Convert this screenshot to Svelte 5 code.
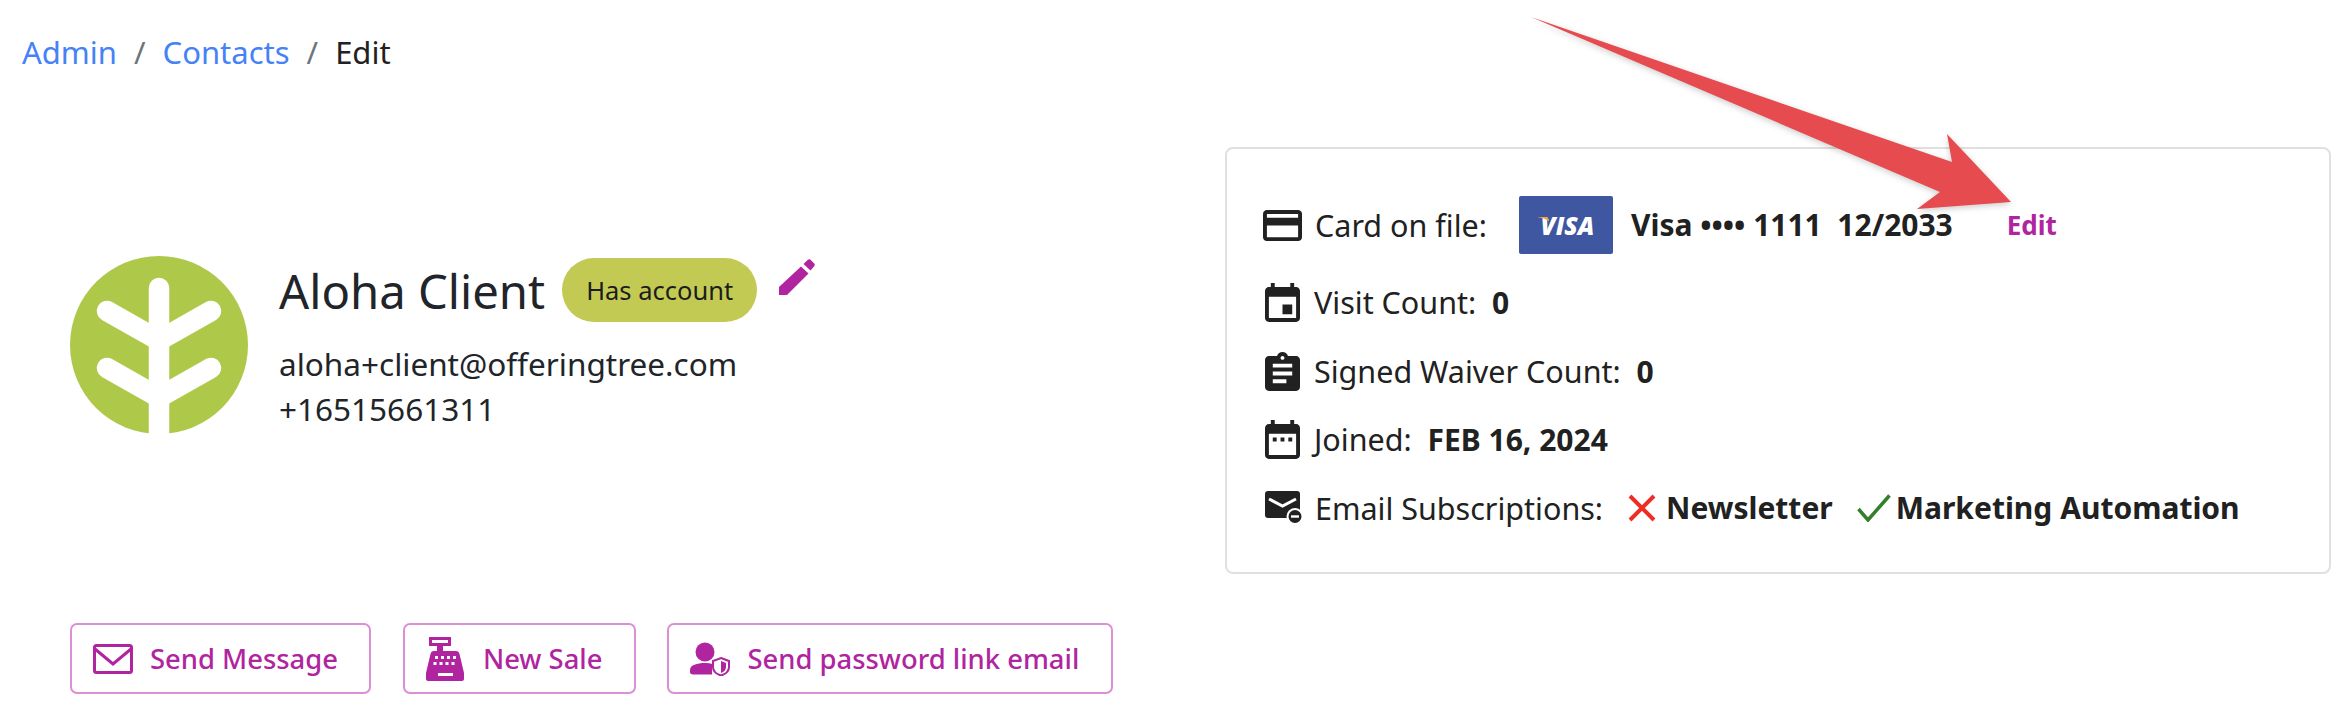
<script lang="ts">
	const crumbs = ['Admin', 'Contacts'];
</script>

<div class="page">
	<nav class="crumbs">
		{#each crumbs as c}
			<span class="link">{c}</span>
			<span class="sep">/</span>
		{/each}
		<span>Edit</span>
	</nav>

	<div class="main">
		<div class="left">
			<div class="head">
				<svg class="avatar" viewBox="0 0 178 178">
					<circle cx="89" cy="89" r="89" fill="#aec84a" />
					<g stroke="#fff" stroke-width="20.5" stroke-linecap="round" fill="none">
						<path d="M89 32V190" />
						<path d="M37 55L89 84.500L141 55" />
						<path d="M37 112L89 141.500L141 112" />
					</g>
				</svg>
				<div class="info">
					<div class="name-row">
						<span class="name">Aloha Client</span>
						<span class="pill">Has account</span>
						<svg class="pencil" viewBox="0 0 36 36">
							<path d="M0 28L22 7.500L29.500 14.500L8 36H0Z" />
							<path d="M24.500 5L28.600 1C29.600 0 30.800 0 31.800 1L35 4.200C36 5.200 36 6.400 35 7.400L31.500 11.500Z" />
						</svg>
					</div>
					<div class="contact">aloha+client@offeringtree.com</div>
					<div class="contact">+16515661311</div>
				</div>
			</div>

			<div class="actions">
				<button class="btn msg">
					<svg class="btn-icon" width="40" height="30" viewBox="0 0 40 30">
						<rect x="1.500" y="1.500" width="37" height="27" rx="2" fill="none" stroke="#b0259f" stroke-width="3" />
						<path d="M2 5L20 20L38 5" fill="none" stroke="#b0259f" stroke-width="3" />
					</svg>
					Send Message
				</button>
				<button class="btn sale">
					<svg class="btn-icon" width="40" height="44" viewBox="0 0 40 44">
						<path fill="#b0259f" d="M3 0H25V9H17V14H30C32 14 33 15 33.500 17L38 36V42C38 43 37 44 36 44H2C1 44 0 43 0 42V36L4.500 17C5 15 6 14 8 14H11V9H3ZM6 3V6H22V3Z" />
						<g fill="#fff">
							<rect x="9" y="19" width="3" height="3" /><rect x="15" y="19" width="3" height="3" /><rect x="21" y="19" width="3" height="3" /><rect x="27" y="19" width="3" height="3" />
							<rect x="7.500" y="25" width="3" height="3" /><rect x="13.500" y="25" width="3" height="3" /><rect x="19.500" y="25" width="3" height="3" /><rect x="25.500" y="25" width="3" height="3" />
							<rect x="12" y="36" width="15" height="3" />
						</g>
					</svg>
					New Sale
				</button>
				<button class="btn pw">
					<svg class="btn-icon" width="40" height="34" viewBox="0 0 40 34">
						<circle cx="15" cy="10" r="9.500" fill="#b0259f" />
						<path fill="#b0259f" d="M0 28C0 23 7 21 15 21C18 21 20 21.300 22 22V32.500H3C1 32.500 0 31.500 0 30Z" />
						<path fill="none" stroke="#b0259f" stroke-width="2" d="M31 16L39 19V25C39 29 36 32 31 33.500C26 32 23 29 23 25V19Z" />
						<path fill="#b0259f" d="M31 19L36 21V25C36 28 34 29.800 31 31Z" />
					</svg>
					Send password link email
				</button>
			</div>
		</div>

		<div class="card">
			<div class="row first">
				<svg class="icon wide" viewBox="2 4 20 16" preserveAspectRatio="none"><path d="M20 4H4c-1.110 0-1.990.890-1.990 2L2 18c0 1.110.890 2 2 2h16c1.110 0 2-.890 2-2V6c0-1.110-.890-2-2-2zm0 14H4v-6h16v6zm0-10H4V6h16v2z" /></svg>
				<span class="label">Card on file:</span>
				<span class="visa">
					<span class="visa-text">VISA</span>
					<svg class="swoosh" viewBox="0 0 12 5"><path d="M0 0H9C11 0 12 1.500 12 4.500C9 2 5 .8 0 0Z" /></svg>
				</span>
				<b class="card-no">Visa •••• 1111 &nbsp;12/2033</b>
				<b class="edit">Edit</b>
			</div>
			<div class="row">
				<svg class="icon" viewBox="3 1 18 20"><path d="M17 12h-5v5h5v-5zM16 1v2H8V1H6v2H5c-1.110 0-1.990.900-1.990 2L3 19c0 1.100.890 2 2 2h14c1.100 0 2-.900 2-2V5c0-1.100-.900-2-2-2h-1V1h-2zm3 18H5V8h14v11z" /></svg>
				<span class="label">Visit Count: &nbsp;<b>0</b></span>
			</div>
			<div class="row">
				<svg class="icon" viewBox="3 1 18 20"><path d="M19 3h-4.180C14.400 1.840 13.300 1 12 1c-1.300 0-2.400.840-2.820 2H5c-1.100 0-2 .900-2 2v14c0 1.100.900 2 2 2h14c1.100 0 2-.900 2-2V5c0-1.100-.900-2-2-2zm-7 0c.550 0 1 .450 1 1s-.450 1-1 1-1-.450-1-1 .450-1 1-1zm2 14H7v-2h7v2zm3-4H7v-2h10v2zm0-4H7V7h10v2z" /></svg>
				<span class="label">Signed Waiver Count: &nbsp;<b>0</b></span>
			</div>
			<div class="row">
				<svg class="icon" viewBox="3 2 18 20"><path d="M9 11H7v2h2v-2zm4 0h-2v2h2v-2zm4 0h-2v2h2v-2zm2-7h-1V2h-2v2H8V2H6v2H5c-1.110 0-1.990.900-1.990 2L3 20c0 1.100.890 2 2 2h14c1.100 0 2-.900 2-2V6c0-1.100-.900-2-2-2zm0 16H5V9h14v11z" /></svg>
				<span class="label">Joined: &nbsp;<b>FEB 16, 2024</b></span>
			</div>
			<div class="row">
				<svg class="icon mail" viewBox="0 0 38 33">
					<rect x="0" y="0" width="35" height="27" rx="3" />
					<path d="M4 8L17.500 15L31 8" fill="none" stroke="#fff" stroke-width="3" />
					<circle cx="30" cy="25.500" r="8.500" fill="#fff" />
					<circle cx="30" cy="25.500" r="6.500" />
					<rect x="26" y="24.300" width="8" height="2.400" fill="#fff" />
				</svg>
				<span class="label">Email Subscriptions:</span>
				<svg class="mark cross" viewBox="0 0 28 28"><path d="M2 2L26 26M26 2L2 26" /></svg>
				<b class="sub">Newsletter</b>
				<svg class="mark check" viewBox="0 0 34 28"><path d="M1.500 15L11 26L32.500 1.500" /></svg>
				<b class="sub">Marketing Automation</b>
			</div>
		</div>
	</div>

	<svg class="arrow" width="560" height="250" viewBox="1500 0 560 250">
		<path d="M1531 17L1952 162L1947 134L2011 202L1917 209L1940 192Z" />
	</svg>
</div>

<style>
	:global(body) {
		margin: 0;
		background: #fff;
		font-family: 'Noto Sans', sans-serif;
		color: #212529;
	}

	.page {
		position: relative;
		height: 714px;
		overflow: hidden;
	}

	.crumbs {
		display: flex;
		align-items: center;
		gap: 17px;
		padding: 30px 0 0 22px;
		height: 44px;
		font-size: 31px;
		color: #212121;
	}

	.link {
		color: #4582f7;
	}

	.sep {
		color: #6c757d;
	}

	.main {
		display: flex;
		margin-top: 73px;
	}

	.left {
		width: 1225px;
		flex-shrink: 0;
		box-sizing: border-box;
		padding: 109px 0 0 70px;
	}

	.head {
		display: flex;
		gap: 31px;
		height: 178px;
	}

	.avatar {
		width: 178px;
		height: 178px;
		flex-shrink: 0;
	}

	.info {
		padding-top: 2px;
	}

	.name-row {
		display: flex;
		align-items: center;
		height: 64px;
		margin-bottom: 19px;
	}

	.name {
		font-size: 47.250px;
		margin-right: 17px;
	}

	.pill {
		display: flex;
		align-items: center;
		height: 64px;
		padding: 0 24px;
		border-radius: 32px;
		background: #c3ca54;
		color: #1c1c1c;
		font-size: 25.500px;
	}

	.pencil {
		width: 36px;
		height: 36px;
		margin: -26px 0 0 22px;
		fill: #b0259f;
	}

	.contact {
		font-size: 31.500px;
		line-height: 45px;
	}

	.actions {
		display: flex;
		gap: 31.500px;
		margin-top: 189px;
	}

	.btn {
		display: flex;
		align-items: center;
		height: 71px;
		box-sizing: border-box;
		padding: 0 31.500px 0 21px;
		background: #fff;
		border: 2px solid #de8fd3;
		border-radius: 7px;
		color: #b0259f;
		font: 500 27.400px 'Noto Sans', sans-serif;
	}

	.btn-icon {
		margin-right: 17px;
		flex-shrink: 0;
	}

	.card {
		width: 1106px;
		height: 427px;
		box-sizing: border-box;
		padding: 47px 36px 0;
		border: 2px solid #e0e0e0;
		border-radius: 8px;
		display: flex;
		flex-direction: column;
		gap: 27.500px;
		color: #212121;
		font-size: 30.500px;
		line-height: 40px;
	}

	.label b {
		font-size: 30px;
	}

	.row {
		display: flex;
		align-items: center;
		min-height: 40px;
	}

	.first {
		margin-bottom: 0.5px;
	}

	.icon {
		width: 35px;
		height: 39px;
		margin: 0 14px 0 2px;
		flex-shrink: 0;
		fill: #212121;
	}

	.wide {
		width: 39px;
		height: 31px;
		margin: 0 13px 0 0;
	}

	.mail {
		width: 38px;
		height: 33px;
		margin: 0 12px 0 2px;
	}

	.visa {
		position: relative;
		display: flex;
		align-items: center;
		justify-content: center;
		box-sizing: border-box;
		width: 94px;
		height: 58px;
		padding-left: 3px;
		margin: 0 18px 0 32px;
		background: #3f56a1;
		border-radius: 2px;
	}

	.visa-text {
		color: #fff;
		font: italic 800 24.500px 'Open Sans', sans-serif;
	}

	.swoosh {
		position: absolute;
		left: 18px;
		top: 21px;
		width: 12px;
		height: 5px;
		fill: #f0a83a;
	}

	.card-no {
		font-size: 30px;
		margin-right: 54px;
	}

	.edit {
		color: #b0259f;
		font-size: 26px;
	}

	.mark {
		flex-shrink: 0;
		fill: none;
	}

	.cross {
		width: 28px;
		height: 28px;
		margin: 0 10px 0 25px;
		stroke: #ee2e24;
		stroke-width: 4;
	}

	.check {
		width: 34px;
		height: 28px;
		margin: 0 5px 0 24px;
		stroke: #33802a;
		stroke-width: 3.500;
	}

	.sub {
		font-size: 30px;
	}

	.arrow {
		position: absolute;
		left: 1500px;
		top: 0;
		fill: #e54b4f;
		filter: drop-shadow(0 2px 3px rgba(0, 0, 0, 0.2));
	}
</style>
